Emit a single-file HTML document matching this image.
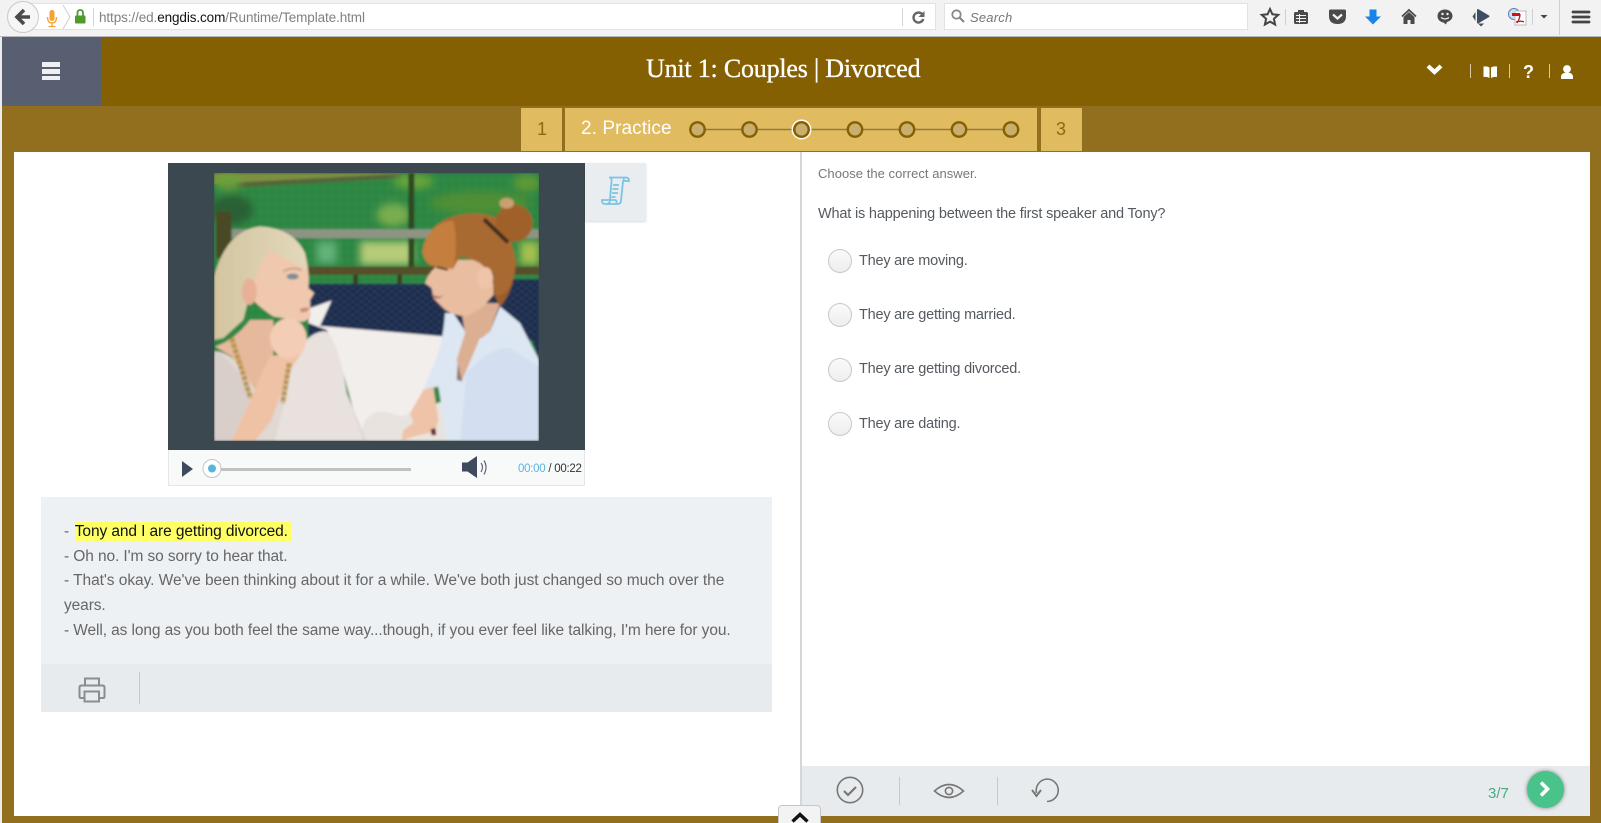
<!DOCTYPE html>
<html><head><meta charset="utf-8"><style>
html,body{margin:0;padding:0;width:1601px;height:823px;overflow:hidden;background:#fff}
body{position:relative;font-family:"Liberation Sans",sans-serif}
.a{position:absolute}
.t{position:absolute;white-space:nowrap}
.radio{position:absolute;left:828px;width:22px;height:22px;border-radius:50%;background:linear-gradient(#fafafa,#eeeeee);border:1px solid #c8c8c8}
.ans{position:absolute;left:859px;white-space:nowrap;font-size:14.5px;line-height:20px;color:#555a60;letter-spacing:-.22px}
.line{position:absolute;left:64px;white-space:nowrap;font-size:15.5px;line-height:24px;color:#666;letter-spacing:-.1px}
</style></head><body>
<!-- browser chrome -->
<div class="a" style="left:0;top:0;width:1601px;height:36px;background:#f2f2f2;border-bottom:1px solid #b8b8b8"></div>
<div class="a" style="left:30px;top:3px;width:906px;height:27px;background:#fff;border:1px solid #e2e2e2;box-sizing:border-box"></div>
<div class="a" style="left:944px;top:3px;width:304px;height:27px;background:#fff;border:1px solid #e2e2e2;box-sizing:border-box"></div>
<div class="a" style="left:7px;top:1px;width:32px;height:32px;box-sizing:border-box;border-radius:50%;background:#f6f6f6;border:1px solid #c9c9c9"></div>
<div class="t" style="left:99px;top:9px;font-size:13.5px;line-height:18px;color:#808080;letter-spacing:-.1px">https://ed.<span style="color:#111">engdis.com</span>/Runtime/Template.html</div>
<div class="t" style="left:970px;top:9px;font-size:13px;line-height:18px;color:#777;font-style:italic;letter-spacing:.2px">Search</div>
<svg class="a" style="left:0;top:0" width="1601" height="37" viewBox="0 0 1601 37">
 <path d="M24 10l-7 7 7 7M17 17h13" fill="none" stroke="#4a4a4a" stroke-width="3.6"/>
 <rect x="49.500" y="10" width="5" height="11" rx="2.500" fill="#f7a12e"/><path d="M47.500 17q0 6 4.500 6t4.500-6M52 23v3M48.500 26.500h7" fill="none" stroke="#f7a12e" stroke-width="1.300"/>
 <path d="M63 5l7 12-7 12" fill="none" stroke="#d0d0d0"/>
 <rect x="75" y="15.500" width="10.500" height="8" rx="1" fill="#4f9a2e"/><path d="M77.500 16v-3q0-3 2.750-3t2.750 3v3" fill="none" stroke="#4f9a2e" stroke-width="1.800"/>
 <path d="M93.500 8v18M902.500 8v18" stroke="#d4d4d4"/>
 <path d="M922.500 14.500a5 5 0 1 0 .8 4.500" fill="none" stroke="#666" stroke-width="2.400"/><path d="M924.500 11v6h-6z" fill="#666"/>
 <circle cx="956.500" cy="14.500" r="4.200" fill="none" stroke="#888" stroke-width="1.800"/><path d="M959.500 17.500l4.500 4.500" stroke="#888" stroke-width="2.200"/>
 <path d="M1270 9l2.400 5.300 5.800.6-4.300 3.900 1.200 5.700-5.100-2.900-5.100 2.900 1.200-5.700-4.300-3.900 5.800-.6z" fill="none" stroke="#444" stroke-width="2"/>
 <path d="M1285.500 9v16M1532.500 9v16M1559.500 0v35" stroke="#cfcfcf"/>
 <rect x="1294" y="12" width="14" height="12" rx="1.500" fill="#4a4a4a"/><rect x="1298" y="10" width="6" height="3" fill="#4a4a4a"/><path d="M1296 15.500h10M1296 18.500h10M1296 21.500h10M1299.500 14v9" stroke="#f2f2f2" stroke-width="1"/>
 <path d="M1329.500 9.500h15.500q1.500 0 1.500 1.500v5q0 8-8.500 8t-8.500-8v-5q0-1.500 1.500-1.500z" transform="translate(-.5 0)" fill="#4a4a4a"/><path d="M1333 14.500l4.500 4 4.500-4" fill="none" stroke="#f2f2f2" stroke-width="2.200"/>
 <path d="M1369.500 9.500h7v7h4.500l-8 8-8-8h4.500z" fill="#1a84e8"/>
 <path d="M1402 16.500l7-6.500 7 6.500" fill="none" stroke="#4a4a4a" stroke-width="1.800"/><path d="M1403.500 17l5.500-5 5.500 5v7h-4v-4h-3v4h-4z" fill="#4a4a4a"/>
 <path d="M1445 9.500c-4.500 0-7.500 3-7.500 6.500s2.500 6 6 6.500l2.500 2 1-2.500c3.500-1 5.500-3.500 5.500-6 0-3.500-3-6.500-7.500-6.500z" fill="#4a4a4a"/><circle cx="1442.500" cy="14" r="1.200" fill="#f2f2f2"/><circle cx="1447.500" cy="14" r="1.200" fill="#f2f2f2"/><path d="M1441 17.500q4 3 8 0" fill="none" stroke="#f2f2f2" stroke-width="1.200"/>
 <path d="M1477 10q0-1.500 1.500-.8l10.500 6.300q1 .8 0 1.500l-10.500 6.300q-1.500 .7-1.500-.8z" fill="#3f4f63"/><path d="M1475.500 12l-3 4.500 3 4.500zM1478 23.500h6l-3 3z" fill="#3f4f63"/>
 <circle cx="1514" cy="14" r="5.500" fill="#cfe0f5" stroke="#5a7fb5"/><rect x="1515" y="11" width="11" height="14" fill="#fff" stroke="#bbb"/><path d="M1512 13h8v3h-8z" fill="#c4151c"/><path d="M1517 23c2-3 3-6 3-9M1516 22c3-1 6-1 8 0" fill="none" stroke="#c4151c" stroke-width="1.300"/>
 <path d="M1540.500 15h7l-3.500 3.500z" fill="#444"/>
 <path d="M1573 12h16M1573 17h16M1573 22h16" stroke="#444" stroke-width="2.800" stroke-linecap="round"/>
</svg>
<!-- frame -->
<div class="a" style="left:0;top:37px;width:2px;height:786px;background:#ececec"></div>
<div class="a" style="left:2px;top:37px;width:1599px;height:69px;background:#856003"></div>
<div class="a" style="left:2px;top:106px;width:1599px;height:717px;background:#926f1f"></div>
<div class="a" style="left:2px;top:37px;width:99px;height:69px;background:#585f70"></div>
<div class="a" style="left:42px;top:62px;width:18px;height:5px;background:#eef0f6"></div>
<div class="a" style="left:42px;top:69px;width:18px;height:4.500px;background:#eef0f6"></div>
<div class="a" style="left:42px;top:75.500px;width:18px;height:4.500px;background:#eef0f6"></div>
<div class="t" style="left:646px;top:54px;font-family:'Liberation Serif',serif;font-size:26px;line-height:30px;color:#fff;letter-spacing:-.2px;-webkit-text-stroke:.35px #fff">Unit 1: Couples | Divorced</div>
<svg class="a" style="left:1420px;top:55px" width="170" height="30" viewBox="1420 55 170 30">
 <path d="M1428 66l6.500 6 6.500-6" fill="none" stroke="#fff" stroke-width="4.200"/>
 <path d="M1470.500 64v14M1509.500 64v14M1549.500 64v14" stroke="#d9c9a0"/>
 <path d="M1483.500 66.500q3.500-.5 6 1v10.500q-2.500-1.500-6-1zM1497 66.500q-3.500-.5-6 1v10.500q2.500-1.500 6-1z" fill="#fff"/>
 <circle cx="1567" cy="69" r="3.900" fill="#fff"/><path d="M1561 79v-3q1-3.500 6-3.500t6 3.500v3z" fill="#fff"/>
</svg>
<div class="t" style="left:1523px;top:61px;font-size:18px;line-height:22px;font-weight:bold;color:#fff">?</div>
<!-- stepper -->
<div class="a" style="left:521px;top:108px;width:41px;height:43px;background:#e0bb60"></div>
<div class="a" style="left:565px;top:108px;width:472px;height:43px;background:#e0bb60"></div>
<div class="a" style="left:1041px;top:108px;width:41px;height:43px;background:#e0bb60"></div>
<div class="t" style="left:537px;top:118px;font-size:18px;line-height:22px;color:#8a6a14">1</div>
<div class="t" style="left:1056px;top:118px;font-size:18px;line-height:22px;color:#8a6a14">3</div>
<div class="t" style="left:581px;top:118px;font-size:19px;line-height:22px;color:#fff;letter-spacing:.08px">2. Practice</div>
<svg class="a" style="left:680px;top:115px" width="350" height="30" viewBox="680 115 350 30">
 <path d="M698 129.500h313" stroke="#8f7a3f" stroke-width="1.500"/>
 <g fill="#c9ae6e" stroke="#856003" stroke-width="2.400">
 <circle cx="697.500" cy="129.500" r="7.200"/><circle cx="749.500" cy="129.500" r="7.200"/><circle cx="855" cy="129.500" r="7.200"/><circle cx="907" cy="129.500" r="7.200"/><circle cx="959" cy="129.500" r="7.200"/><circle cx="1011" cy="129.500" r="7.200"/>
 <circle cx="801.500" cy="129.500" r="7.200"/></g>
 <circle cx="801.500" cy="129.500" r="9.300" fill="none" stroke="#fff" stroke-width="1.300"/>
</svg>
<!-- main white -->
<div class="a" style="left:14px;top:152px;width:1576px;height:664px;background:#fff"></div>
<div class="a" style="left:800px;top:152px;width:2px;height:664px;background:#d4d6d8"></div>
<div class="a" style="left:802px;top:766px;width:788px;height:50px;background:#e8ebee"></div>
<!-- video -->
<div class="a" style="left:168px;top:163px;width:417px;height:287px;background:#3c4850"></div>
<div class="a" style="left:585px;top:163px;width:61px;height:58px;background:#e9edf0;box-shadow:0 1px 2px rgba(0,0,0,.15)"></div>
<svg class="a" style="left:600px;top:175px" width="32" height="32" viewBox="0 0 32 32" fill="none" stroke="#7cc4e2" stroke-width="1.800">
 <path d="M9 2.500h17q3 0 3 3.500h-5M9 2.500q3 0 2.500 4l-1.500 18q0 4-3 4.500M24 2.500q0 2-1 4l-2 19q0 3.500-3.500 3.500H5q-3 0-3-3v-1h13q1.500 0 1.500 1.500v2"/>
 <path d="M13 10h6M12.500 14h6M12 18h6M11.500 22h4"/>
</svg>
<svg class="a" style="left:214px;top:173px" width="325" height="268" viewBox="162 40 975 803">
 <defs><filter id="b" x="-5%" y="-5%" width="110%" height="110%"><feGaussianBlur stdDeviation="3"/></filter><filter id="b2" x="-30%" y="-30%" width="160%" height="160%"><feGaussianBlur stdDeviation="12"/></filter>
 <linearGradient id="hb" x1="0" y1="0" x2="1" y2="0"><stop offset="0" stop-color="#d3c5a0"/><stop offset="1" stop-color="#e3d8bc"/></linearGradient>
 <pattern id="g" width="24" height="24" patternUnits="userSpaceOnUse"><path d="M0 0h24M0 0v24" stroke="#26703a" stroke-width="4" fill="none"/></pattern>
 <pattern id="w" width="26" height="20" patternUnits="userSpaceOnUse"><rect width="26" height="20" fill="#1d2a48"/><rect width="13" height="10" fill="#28375a"/><rect x="13" y="10" width="13" height="10" fill="#28375a"/></pattern></defs>
 <g filter="url(#b)">
 <rect x="162" y="40" width="975" height="803" fill="#2f8a45"/>
 <rect x="162" y="40" width="975" height="803" fill="url(#g)" opacity=".6"/>
 <path d="M162 40H720V44L190 72H162z" fill="#7d9040"/>
 <path d="M190 70L720 42v14L190 86z" fill="#52683a"/>
 <g filter="url(#b2)">
  <ellipse cx="215" cy="150" rx="65" ry="45" fill="#2a6034"/>
  <ellipse cx="205" cy="65" rx="40" ry="25" fill="#6aa03a"/>
  <ellipse cx="700" cy="165" rx="50" ry="35" fill="#79ad50"/>
  <ellipse cx="760" cy="65" rx="60" ry="22" fill="#6aa53a"/>
  <ellipse cx="960" cy="130" rx="150" ry="35" fill="#4f8f34"/>
  <ellipse cx="1100" cy="70" rx="40" ry="25" fill="#5e9a34"/>
  <rect x="600" y="245" width="160" height="70" fill="#b6cc78"/>
  <rect x="470" y="245" width="60" height="65" fill="#62b27a"/>
  <rect x="1080" y="245" width="57" height="70" fill="#a6bf50"/>
 </g>
 <rect x="745" y="40" width="18" height="280" fill="#2e4a22"/>
 <rect x="168" y="155" width="46" height="140" fill="#4a4a28"/>
 <rect x="215" y="208" width="922" height="27" fill="#8d9484"/>
 <rect x="440" y="320" width="697" height="25" fill="#54502c"/>
 <rect x="580" y="345" width="14" height="35" fill="#3a3a22"/><rect x="712" y="345" width="14" height="30" fill="#3a3a22"/>
 <rect x="445" y="372" width="692" height="170" fill="url(#w)"/>
 <path d="M1050 358h87v240z" fill="url(#w)"/>
 <!-- pillow -->
 <path d="M450 445L515 422 480 498 855 530Q800 640 830 843H600Q560 640 500 510L445 490Z" fill="#f2eeec"/>
 <path d="M600 843Q610 720 720 770L860 720V843Z" fill="#e8e3df"/>
 <!-- blonde top -->
 <path d="M162 575Q200 570 270 640L400 600 500 515Q540 560 560 700L620 843H162Z" fill="#e0d8d3"/>
 <path d="M162 575Q200 580 270 690L290 740 215 843H162Z" fill="#d9cfca"/>
 <path d="M395 610Q440 510 500 515Q540 560 560 700L610 843H345L380 700Z" fill="#e8e1dd"/>
 <!-- blonde chest/arm -->
 <path d="M165 560Q225 540 270 480L340 480 340 600 285 690 215 590Z" fill="#e6b99d"/>
 <path d="M330 590L430 570 385 640 335 780 285 843H215Q270 720 330 590Z" fill="#efc2a6"/>
 <path d="M215 535L272 715M388 610L368 730" fill="none" stroke="#bb9650" stroke-width="15" stroke-dasharray="14 3"/>
 <!-- blonde head -->
 <path d="M300 260Q380 240 435 280Q450 340 445 385L463 400 450 420 452 470Q430 495 405 480L340 470Q280 430 265 400Z" fill="#f0c8ae"/>
 <path d="M162 540V350Q200 210 300 200Q400 205 435 280L440 330 330 270Q290 330 270 400L250 480 190 535Z" fill="url(#hb)"/>
 <ellipse cx="268" cy="395" rx="22" ry="40" fill="#e8b096"/>
 <ellipse cx="385" cy="535" rx="55" ry="60" fill="#f3cdb5"/>
 <ellipse cx="398" cy="350" rx="18" ry="9" fill="#7d8c96"/>
 <path d="M370 335q25-15 55-5" fill="none" stroke="#c69c80" stroke-width="5"/>
 <path d="M420 447q14-6 28-3-3 13-25 14z" fill="#c98a7a"/>
 <!-- redhead body -->
 <path d="M855 460L880 460 920 520Q950 545 990 515L1020 440 1080 490 1137 600V843H860L850 770 835 680 790 690 810 640Q850 560 855 460Z" fill="#dde7f3"/>
 <path d="M920 640Q990 560 1050 565L1137 620V843H900Z" fill="#d3dff0"/>
 <path d="M900 430H1020L990 515Q960 540 960 535L905 665 890 600 915 520Z" fill="#dcaf92"/>
 <path d="M893 610L907 665 890 660Z" fill="#8c7b78"/>
 <path d="M790 690L820 680 835 780 825 815 760 830 725 843 730 810 760 790 750 760Z" fill="#eec3a8"/>
 <path d="M812 808l14-3 3 20-14 2z" fill="#6a1a2a"/>
 <!-- redhead head -->
 <path d="M795 370Q815 310 880 300L950 300Q1000 340 1005 400L970 440 920 470Q870 465 850 445L820 415 815 385Z" fill="#e9bda0"/>
 <path d="M820 406q18 8 30 0-10 14-30 8z" fill="#a8685a"/>
 <path d="M1000 320L1070 300Q1060 400 1020 440L1000 400Z" fill="#9a5e2c"/>
 <path d="M787 270Q810 180 900 165Q980 150 1040 190L1060 270Q1075 320 1050 380Q1020 420 1005 400L1000 340Q960 300 900 290L880 325 820 320Q790 310 787 270Z" fill="#a96a33"/>
 <path d="M787 275Q800 190 880 182Q895 250 880 328L825 320Q790 310 787 275Z" fill="#c47e3e"/>
 <circle cx="1062" cy="190" r="56" fill="#a0602c"/>
 <ellipse cx="1040" cy="130" rx="22" ry="16" fill="#c9a070"/>
 <path d="M972 178l72 70" stroke="#3a2a1c" stroke-width="12" fill="none"/>
 <ellipse cx="975" cy="355" rx="24" ry="34" fill="#efc4a8"/>
 <path d="M830 322l34 8" stroke="#3a2418" stroke-width="6" fill="none"/>
 </g>
</svg>
<!-- controls -->
<div class="a" style="left:168px;top:450px;width:417px;height:36px;background:#f8fafa;border:1px solid #e4e6e8;border-top:0;box-sizing:border-box"></div>
<svg class="a" style="left:168px;top:450px" width="340" height="35" viewBox="168 450 340 35">
 <path d="M182 461v16l11-8z" fill="#3f4a5c"/>
 <rect x="215" y="468" width="196" height="3" fill="#c0c2c2"/>
 <circle cx="212" cy="468.500" r="9" fill="#fff" stroke="#c4c4c4" stroke-width="1"/><circle cx="212" cy="468.500" r="4" fill="#55b7df"/>
 <path d="M462 462.500h5.500l9.500-6.500v22l-9.500-6.500h-5.500z" fill="#3f4a5c"/>
 <path d="M481 463q3 4 0 9M484 460.500q4 6.500 0 14" fill="none" stroke="#5a6472" stroke-width="1.200"/>
</svg>
<div class="t" style="left:518px;top:461px;font-size:11.500px;line-height:16px;color:#333;letter-spacing:-.27px"><span style="color:#5bb4e0">00:00</span> / 00:22</div>
<!-- text panel -->
<div class="a" style="left:41px;top:497px;width:731px;height:167px;background:#eef1f4"></div>
<div class="a" style="left:41px;top:664px;width:731px;height:48px;background:#e8ebee"></div>
<div class="a" style="left:75px;top:522px;width:216px;height:19px;background:#ffff66"></div>
<div class="line" style="top:520px">- <span style="color:#111;padding-left:1.500px">Tony and I are getting divorced.</span></div>
<div class="line" style="top:545px">- Oh no. I'm so sorry to hear that.</div>
<div class="line" style="top:569px;letter-spacing:-.05px">- That's okay. We've been thinking about it for a while. We've both just changed so much over the</div>
<div class="line" style="top:594px">years.</div>
<div class="line" style="top:619px">- Well, as long as you both feel the same way...though, if you ever feel like talking, I'm here for you.</div>
<svg class="a" style="left:70px;top:670px" width="80" height="40" viewBox="70 670 80 40" fill="none" stroke="#8a8c8e" stroke-width="2">
 <path d="M85 686v-7.500h14V686M85 698h-4q-1.500 0-1.500-1.500v-9q0-2 2-2h21q2 0 2 2v9q0 1.500-1.500 1.500h-4"/>
 <rect x="84.500" y="691.500" width="14.500" height="10"/>
 <path d="M139.500 672v32" stroke="#c6c8ca" stroke-width="1"/>
</svg>
<!-- right panel -->
<div class="t" style="left:818px;top:166px;font-size:13px;line-height:16px;color:#74787c;letter-spacing:.04px">Choose the correct answer.</div>
<div class="t" style="left:818px;top:204px;font-size:14.500px;line-height:20px;color:#555a60;letter-spacing:-.18px">What is happening between the first speaker and Tony?</div>
<div class="radio" style="top:249px"></div><div class="ans" style="top:251px">They are moving.</div>
<div class="radio" style="top:303px"></div><div class="ans" style="top:305px">They are getting married.</div>
<div class="radio" style="top:358px"></div><div class="ans" style="top:359px">They are getting divorced.</div>
<div class="radio" style="top:412px"></div><div class="ans" style="top:414px">They are dating.</div>
<svg class="a" style="left:830px;top:770px" width="240" height="42" viewBox="830 770 240 42" fill="none" stroke="#777" stroke-width="1.600">
 <circle cx="850" cy="790" r="12.700"/>
 <path d="M844 791l4 4 8-8" stroke-width="2.200"/>
 <path d="M899.500 777v28M997.500 777v28" stroke="#c6c8ca" stroke-width="1"/>
 <path d="M934.500 791q14.500-13 29 0-14.500 13-29 0z"/><circle cx="949" cy="791" r="3.600"/>
 <path d="M1036.500 793A11.500 11.500 0 0 1 1047 779A11 11 0 0 1 1047 801.500"/><path d="M1032 790l4.500 6 4.500-6" stroke-width="2"/>
</svg>
<div class="t" style="left:1488px;top:785px;font-size:15px;line-height:18px;color:#47ac82">3/7</div>
<div class="a" style="left:1527px;top:771px;width:37px;height:37px;border-radius:50%;background:#49c389;box-shadow:0 0 4px rgba(0,0,0,.45)"></div>
<svg class="a" style="left:1535px;top:779px" width="20" height="20" viewBox="0 0 20 20"><path d="M6 3.500l6.500 6.500-6.500 6.500" fill="none" stroke="#fff" stroke-width="3.600"/></svg>
<div class="a" style="left:778px;top:805px;width:43px;height:18px;background:#f3f3f3;border:1px solid #c6c6c6;border-bottom:0;border-radius:4px 4px 0 0;box-sizing:border-box"></div>
<svg class="a" style="left:790px;top:811px" width="20" height="12" viewBox="0 0 20 12"><path d="M2.500 10.500l7.500-7 7.500 7" fill="none" stroke="#111" stroke-width="3.400"/></svg>
</body></html>
